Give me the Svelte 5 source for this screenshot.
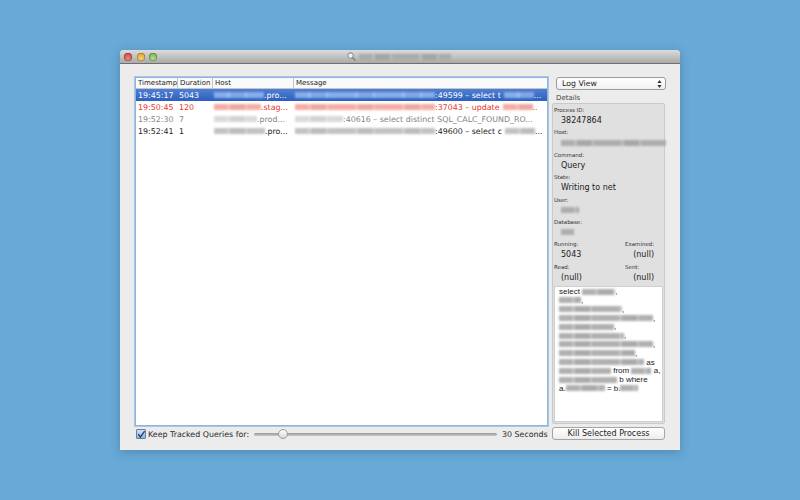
<script>
  // blurred chunks are [width, colour]
  const grey = "#a8a8a8";
  const rows = [
    { ts: "19:45:17", dur: "5043", kind: "selected", tone: "#8fb4ee", hostW: 50, host: ".pro...", msgW: 140, msg: ":49599 – select t", tailW: 30, tail: "..." },
    { ts: "19:50:45", dur: "120", kind: "error", tone: "#f5a49c", hostW: 47, host: ".stag...", msgW: 140, msg: ":37043 – update", tailW: 30, tail: ".." },
    { ts: "19:52:30", dur: "7", kind: "idle", tone: "#d6d6d6", hostW: 43, host: ".prod...", msgW: 48, msg: ":40616 – select distinct  SQL_CALC_FOUND_RO...", tailW: 0, tail: "" },
    { ts: "19:52:41", dur: "1", kind: "", tone: "#bcbcbc", hostW: 51, host: ".pro...", msgW: 140, msg: ":49600 – select c", tailW: 30, tail: "..." }
  ];

  const details = [
    { label: "Process ID:", value: "38247864" },
    { label: "Host:", blur: 105 },
    { label: "Command:", value: "Query" },
    { label: "State:", value: "Writing to net" },
    { label: "User:", blur: 18 },
    { label: "Database:", blur: 13 }
  ];

  const pairs = [
    [{ label: "Running:", value: "5043" }, { label: "Examined:", value: "(null)" }],
    [{ label: "Read:", value: "(null)" }, { label: "Sent:", value: "(null)" }]
  ];

  const sql = [
    [["select ", 0], [0, 33], [",", 0]],
    [[0, 22], [",", 0]],
    [[0, 63], [",", 0]],
    [[0, 94], [",", 0]],
    [[0, 55], [",", 0]],
    [[0, 65], [",", 0]],
    [[0, 94], [",", 0]],
    [[0, 76], [",", 0]],
    [[0, 85], [" as", 0]],
    [[0, 52], [" from ", 0], [0, 20], [" a,", 0]],
    [[0, 58], [" b where", 0]],
    [["a.", 0], [0, 39], [" = b.", 0], [0, 18]]
  ];
</script>

<div class="desktop">
  <div class="window">
    <header class="titlebar">
      <div class="lights">
        <span class="light red"></span>
        <span class="light yellow"></span>
        <span class="light green"></span>
      </div>
      <div class="title">
        <svg width="9" height="9" viewBox="0 0 10 10">
          <circle cx="4" cy="4" r="3" fill="#eef2f5" stroke="#8f959b" stroke-width="1.2" />
          <path d="M6.2 6.2 9.4 9.4" stroke="#7d8186" stroke-width="1.6" />
        </svg>
        <span class="smudge" style="width: 92px; background-color: #a9a9a9"></span>
      </div>
    </header>

    <div class="content">
      <div class="left">
        <div class="table">
          <div class="thead">
            <span class="c ts">Timestamp</span>
            <span class="c dur">Duration</span>
            <span class="c host">Host</span>
            <span class="c msg">Message</span>
          </div>
          {#each rows as r}
            <div class="row {r.kind}">
              <span class="c ts">{r.ts}</span>
              <span class="c dur">{r.dur}</span>
              <span class="c host">
                <span class="smudge" style="width: {r.hostW}px; background-color: {r.tone}"></span>{r.host}
              </span>
              <span class="c msg">
                <span class="smudge" style="width: {r.msgW}px; background-color: {r.tone}"></span>{r.msg}{#if r.tailW}<span class="smudge tail" style="width: {r.tailW}px; background-color: {r.tone}"></span>{r.tail}{/if}
              </span>
            </div>
          {/each}
        </div>
        <div class="footer">
          <span class="check">
            <svg width="9" height="9" viewBox="0 0 9 9">
              <path d="M1.5 4.2 3.8 7.4 8.6 0.8" fill="none" stroke="#1d3f78" stroke-width="1.5" />
            </svg>
          </span>
          <span class="keep">Keep Tracked Queries for:</span>
          <div class="slider"><span class="thumb"></span></div>
          <span class="secs">30 Seconds</span>
        </div>
      </div>

      <aside class="side">
        <div class="select">
          <span>Log View</span>
          <svg width="5" height="8" viewBox="0 0 5 8">
            <path d="M2.5 0 4.6 3H.4ZM2.5 8 .4 5H4.6Z" fill="#333" />
          </svg>
        </div>
        <div class="caption">Details</div>
        <div class="details">
          {#each details as d}
            <div class="field">
              <div class="label">{d.label}</div>
              {#if d.value}
                <div class="value">{d.value}</div>
              {:else}
                <div class="value"><span class="smudge" style="width: {d.blur}px; background-color: {grey}"></span></div>
              {/if}
            </div>
          {/each}
          {#each pairs as pair}
            <div class="pair">
              {#each pair as p, i}
                <div class="field" class:end={i === 1}>
                  <div class="label">{p.label}</div>
                  <div class="value">{p.value}</div>
                </div>
              {/each}
            </div>
          {/each}
          <div class="sql">
            {#each sql as line}
              <div>
                {#each line as part}
                  {#if part[0]}{part[0]}{:else}<span class="smudge" style="width: {part[1]}px; background-color: {grey}"></span>{/if}
                {/each}
              </div>
            {/each}
          </div>
        </div>
        <div class="button">Kill Selected Process</div>
      </aside>
    </div>
  </div>
</div>

<style>
  :global(body) {
    margin: 0;
  }

  .desktop {
    width: 800px;
    height: 500px;
    background: #68a9d7;
    display: flex;
    align-items: center;
    justify-content: center;
    font-family: "DejaVu Sans", sans-serif;
    color: #1c1c1c;
    overflow: hidden;
  }

  .window {
    width: 560px;
    height: 400px;
    background: #ececec;
    border-radius: 4px 4px 0 0;
    display: flex;
    flex-direction: column;
    box-shadow: 0 2px 10px rgba(30, 60, 90, 0.3);
  }

  .titlebar {
    height: 13px;
    flex: none;
    display: flex;
    align-items: center;
    background: linear-gradient(#dcdcdc, #aaaaaa);
    border-bottom: 1px solid #6f6f6f;
    border-radius: 4px 4px 0 0;
  }

  .lights {
    display: flex;
    gap: 4.5px;
    margin-left: 4px;
  }

  .light {
    width: 8px;
    height: 8px;
    border-radius: 50%;
    box-shadow: inset 0 0 0 0.5px rgba(0, 0, 0, 0.4);
  }

  .red { background: radial-gradient(circle at 50% 70%, #f0857c, #c43a30); }
  .yellow { background: radial-gradient(circle at 50% 70%, #f8d070, #d6981f); }
  .green { background: radial-gradient(circle at 50% 70%, #b5de88, #6aa53f); }

  .title {
    margin-left: 190px;
    display: flex;
    align-items: center;
    gap: 3px;
  }

  .title svg {
    margin-top: -1px;
  }

  /* stands in for the blurred-out names, uneven like the real thing */
  .smudge {
    display: inline-block;
    height: 6px;
    vertical-align: -0.5px;
    filter: blur(1.3px);
    opacity: 0.9;
    background-image: repeating-linear-gradient(90deg,
      rgba(255, 255, 255, 0) 0 13px,
      rgba(255, 255, 255, 0.22) 13px 16px,
      rgba(0, 0, 0, 0.04) 16px 31px,
      rgba(255, 255, 255, 0.25) 31px 33px,
      rgba(255, 255, 255, 0) 33px 47px);
  }

  .tail {
    margin-left: 3px;
  }

  .content {
    flex: 1;
    display: flex;
    padding: 13px 14px 9px 15px;
    gap: 4px;
    min-height: 0;
  }

  .left {
    width: 413px;
    display: flex;
    flex-direction: column;
  }

  .table {
    height: 349px;
    box-sizing: border-box;
    background: #fff;
    border: 1px solid #8eb6dc;
    box-shadow: 0 0 0 1px #a9c6e3;
    font-size: 7.9px;
  }

  .thead {
    height: 10px;
    display: flex;
    align-items: center;
    font-size: 7px;
    border-bottom: 1px solid #c5c5c5;
    background: #fafafa;
  }

  .thead .c + .c {
    border-left: 1px solid #c4c4c4;
  }

  .row {
    height: 12px;
    display: flex;
    align-items: center;
  }

  .c {
    box-sizing: border-box;
    padding-left: 2px;
    white-space: nowrap;
    overflow: hidden;
    line-height: 11px;
  }

  .ts { width: 41px; flex: none; }
  .dur { width: 35px; flex: none; }
  .host { width: 81px; flex: none; }
  .msg { flex: 1; }

  .selected {
    background: linear-gradient(#4f7fd4, #2d5fbd);
    color: #fff;
  }

  .error { color: #e8352b; }
  .idle { color: #858585; }

  .footer {
    flex: 1;
    display: flex;
    align-items: center;
    font-size: 7.9px;
    padding: 1px 1px 0;
    color: #2a2a2a;
  }

  .check {
    width: 8px;
    height: 8px;
    flex: none;
    border: 1px solid #6a7f99;
    border-radius: 1px;
    background: linear-gradient(#cfe0f3, #8fb6e2);
    display: flex;
  }

  .keep {
    margin-left: 2px;
    width: 106px;
    flex: none;
    white-space: nowrap;
  }

  .slider {
    width: 243px;
    height: 3px;
    flex: none;
    background: linear-gradient(#9a9a9a, #c8c8c8);
    border-radius: 2px;
    display: flex;
    align-items: center;
    padding-left: 24px;
    box-sizing: border-box;
  }

  .thumb {
    width: 10px;
    height: 10px;
    border-radius: 50%;
    background: linear-gradient(#fdfdfd, #d9d9d9);
    border: 1px solid #9a9a9a;
    box-sizing: border-box;
    flex: none;
  }

  .secs {
    margin-left: 5px;
    white-space: nowrap;
  }

  .side {
    flex: 1;
    display: flex;
    flex-direction: column;
    min-width: 0;
  }

  .select {
    margin-left: 4px;
    width: 110px;
    height: 13px;
    box-sizing: border-box;
    flex: none;
    background: linear-gradient(#ffffff, #f0f0f0);
    border: 1px solid #9c9c9c;
    border-radius: 3px;
    display: flex;
    align-items: center;
    justify-content: space-between;
    padding: 0 3px 0 5px;
    font-size: 7.8px;
  }

  .caption {
    margin: 4px 0 0 4px;
    height: 9px;
    line-height: 9px;
    font-size: 7px;
    color: #444;
  }

  .details {
    width: 113px;
    height: 321px;
    box-sizing: border-box;
    background: #e0e0e0;
    border: 1px solid #cacaca;
    border-radius: 2px;
    padding: 2px 1px 1px;
    display: flex;
    flex-direction: column;
    flex: none;
  }

  .field {
    height: 22.4px;
    flex: none;
  }

  .label {
    font-size: 5.5px;
    line-height: 9px;
    color: #333;
  }

  .value {
    font-size: 8px;
    line-height: 11px;
    padding-left: 7px;
    white-space: nowrap;
  }

  .pair {
    display: flex;
    justify-content: space-between;
    padding-right: 9px;
  }

  .pair .end {
    width: 29px;
  }

  .pair .end .value {
    padding-left: 0;
    text-align: right;
  }

  .sql {
    flex: 1;
    margin-top: 1px;
    background: #fff;
    border: 1px solid #cfcfcf;
    padding: 1px 3px 0 4px;
    font-family: "Liberation Sans", sans-serif;
    font-size: 8px;
    line-height: 8.8px;
    white-space: nowrap;
    color: #222;
  }

  .button {
    margin-top: 3px;
    width: 113px;
    height: 13px;
    box-sizing: border-box;
    flex: none;
    background: linear-gradient(#ffffff, #ededed);
    border: 1px solid #a4a4a4;
    border-radius: 3px;
    font-size: 8px;
    line-height: 11px;
    text-align: center;
    white-space: nowrap;
  }
</style>
